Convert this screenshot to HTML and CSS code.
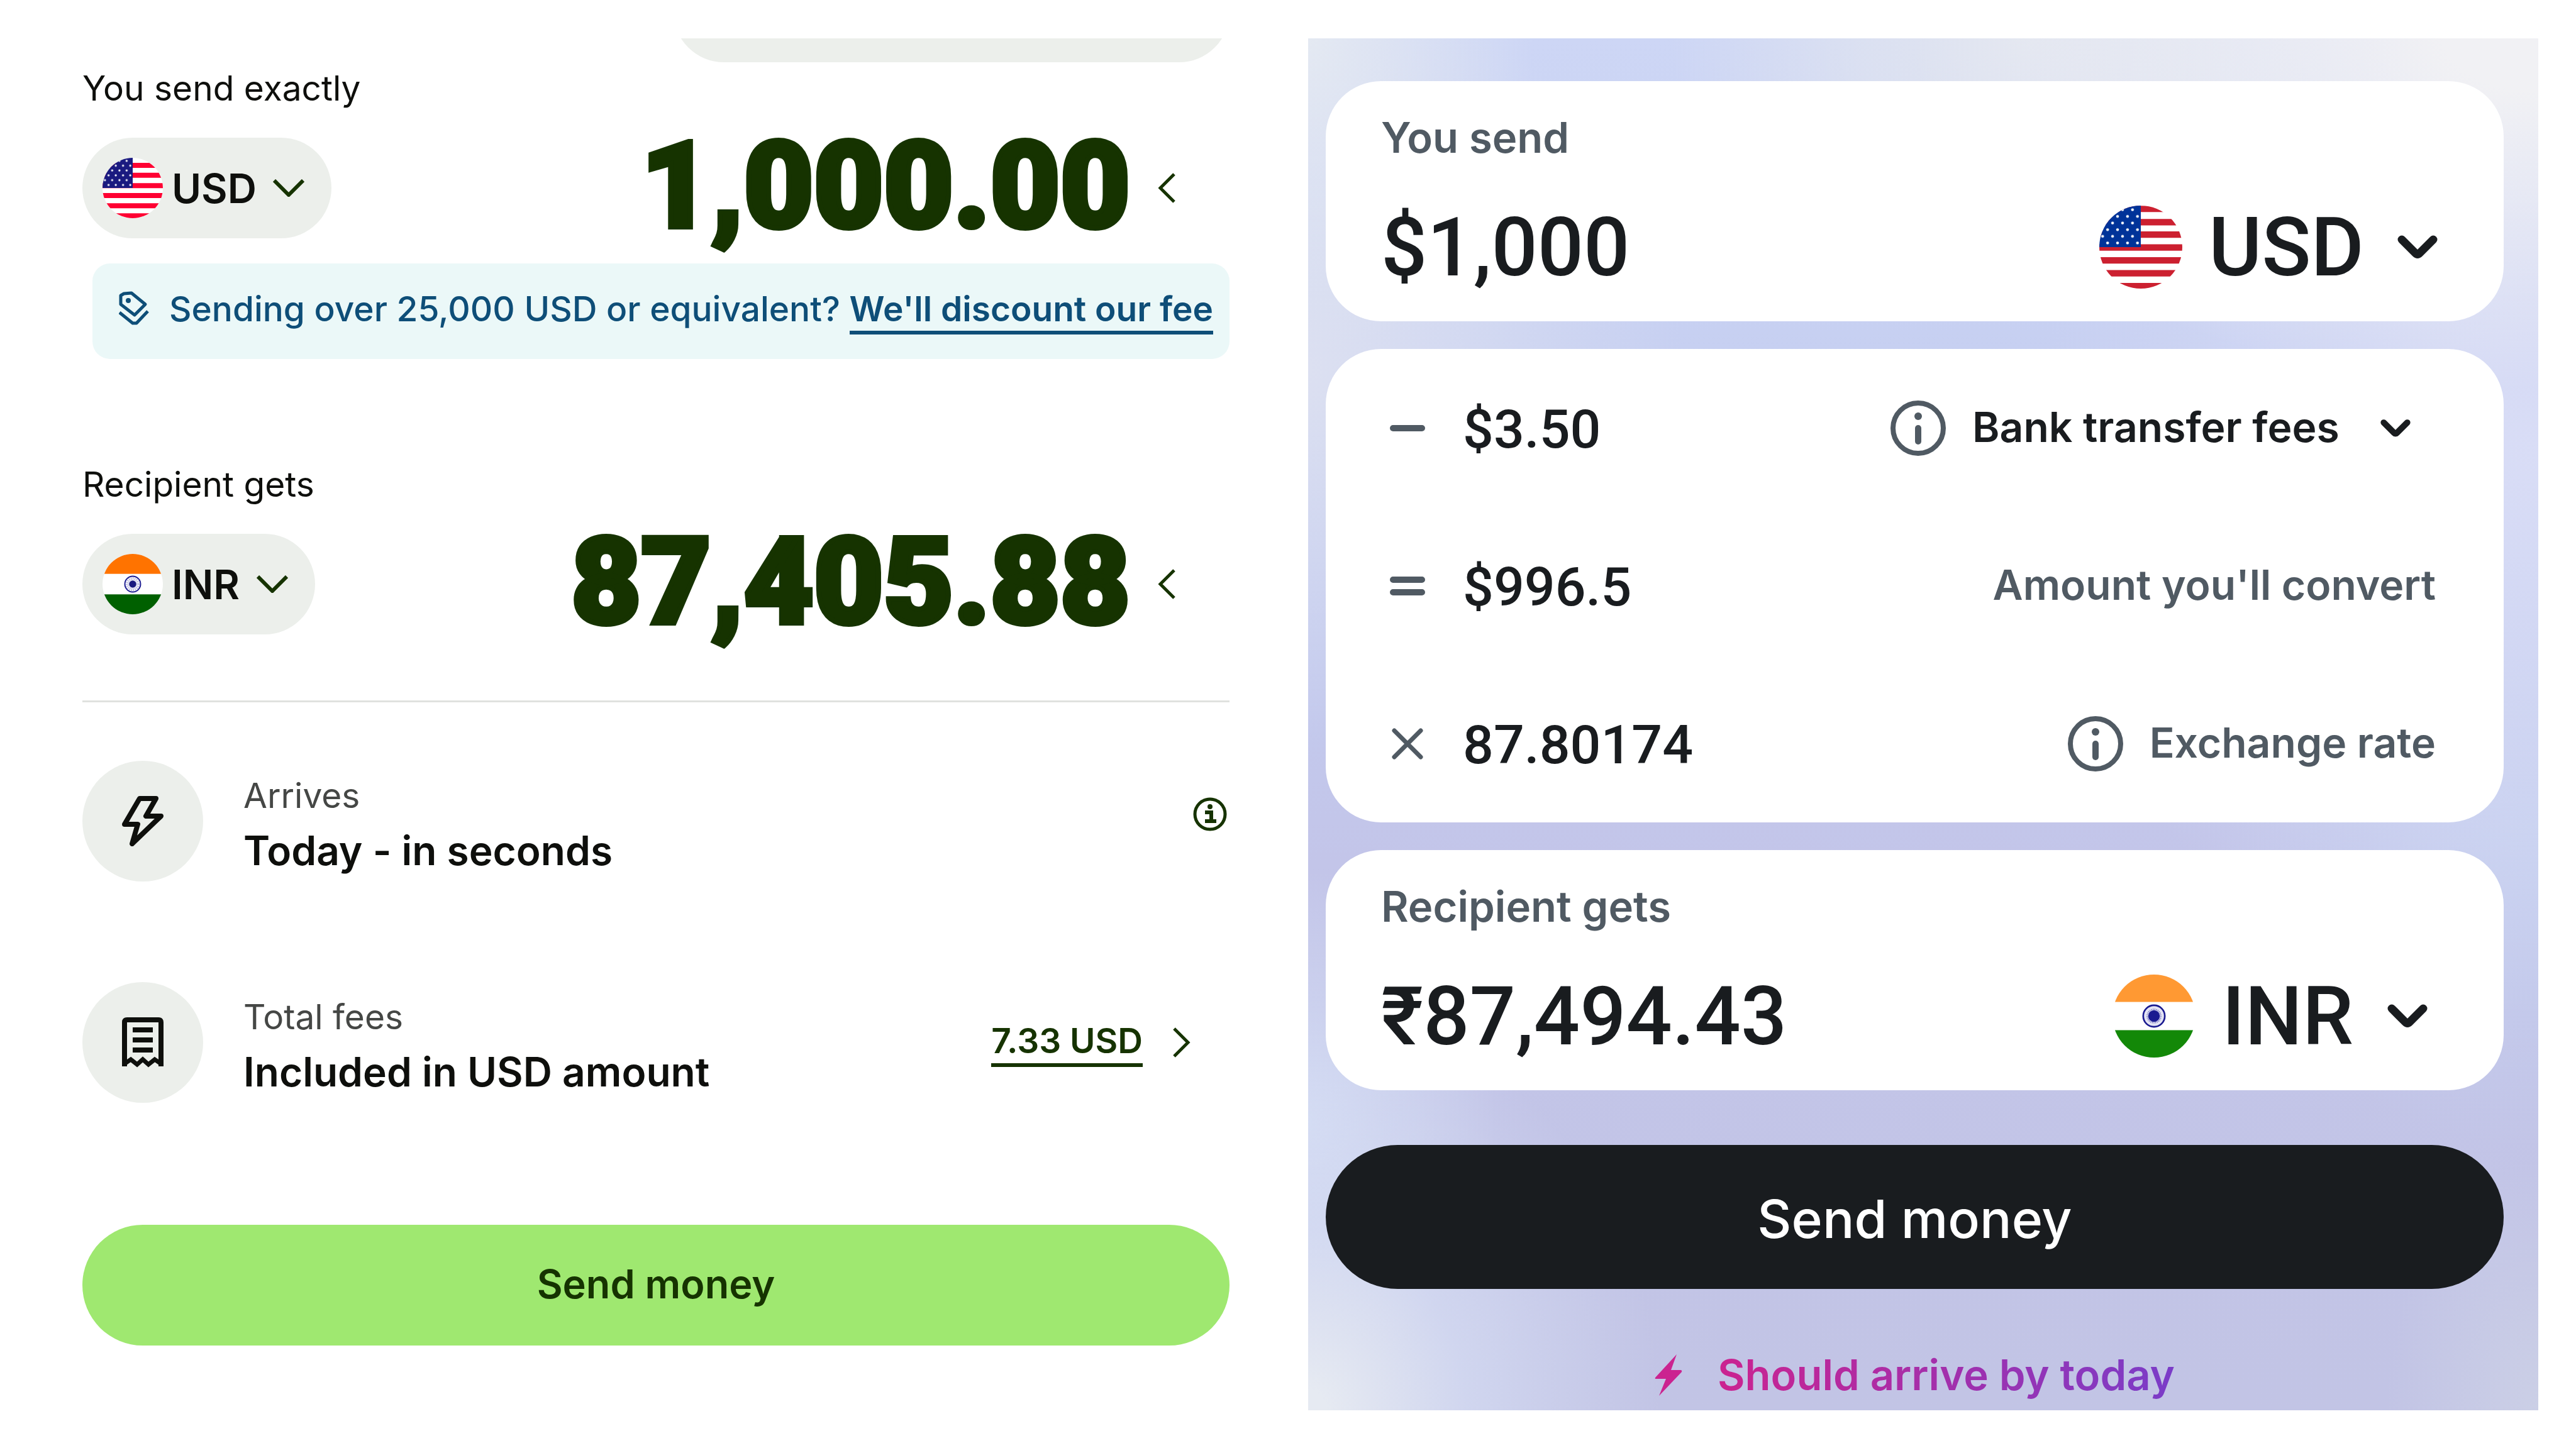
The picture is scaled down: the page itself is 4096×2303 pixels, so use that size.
FILE: index.html
```html
<!DOCTYPE html>
<html lang="en">

<head>
  <meta charset="utf-8">
  <title>Send money</title>
  <link rel="stylesheet" href="styles.css">
</head>

<body>
  <!-- shared icons -->
  <svg class="sprite" aria-hidden="true">
    <defs>
      <clipPath id="round"><circle cx="50" cy="50" r="50" /></clipPath>
      <pattern id="stars" width="12" height="16" patternUnits="userSpaceOnUse" x="1" y="1">
        <circle cx="3" cy="4" r="1.7" fill="#fff" />
        <circle cx="9" cy="12" r="1.7" fill="#fff" />
      </pattern>
    </defs>
    <symbol id="chevron-thin" viewBox="0 0 50 28">
      <path d="M2 2 L25 25 L48 2" fill="none" stroke="#163300" stroke-width="6" />
    </symbol>
    <symbol id="chevron-left" viewBox="0 0 28 48">
      <path d="M26 2 L4 24 L26 46" fill="none" stroke="#163300" stroke-width="5" />
    </symbol>
    <symbol id="chevron-bold" viewBox="0 0 66 40">
      <path d="M8 8 L30 30 Q33 33 36 30 L58 8" fill="none" stroke="#191c1f" stroke-width="13" stroke-linecap="round" />
    </symbol>
    <symbol id="info" viewBox="0 0 88 88">
      <circle cx="44" cy="44" r="40" fill="none" stroke="#505a63" stroke-width="8" />
      <circle cx="44" cy="25" r="6" fill="#505a63" />
      <path d="M44 44 V65" fill="none" stroke="#505a63" stroke-width="10" stroke-linecap="round" />
    </symbol>
  </svg>

  <main class="page">
    <section class="simple">
      <div class="tab-clip"><div class="tab"></div></div>

      <label class="simple-label" for="sendAmount">You send exactly</label>
      <div class="money">
        <div class="pill">
          <svg class="pill-flag" viewBox="0 0 100 100">
            <g clip-path="url(#round)">
              <rect width="100" height="100" fill="#fff" />
              <path d="M0 12.5H100M0 29H100M0 46H100M0 62.500H100M0 79.500H100M0 96H100" stroke="#ff0032" stroke-width="8.300" />
              <rect width="50" height="50" fill="#1a1a80" />
              <rect width="50" height="50" fill="url(#stars)" />
            </g>
          </svg>
          <select class="pill-select" aria-label="Currency you send"><option>USD</option></select>
          <svg class="pill-chevron"><use href="#chevron-thin" /></svg>
        </div>
        <input class="money-amount" id="sendAmount" type="text" value="1,000.00">
        <svg class="money-chevron"><use href="#chevron-left" /></svg>
      </div>

      <div class="notice">
        <svg class="notice-icon" viewBox="0 0 48 54" fill="none" stroke="#0e4e78" stroke-width="5" stroke-linejoin="round">
          <path d="M3 7 L8 4 L20 3 L42 21 L25 38 L3 21 Z" />
          <circle cx="15" cy="15" r="4" fill="#0e4e78" stroke="none" />
          <path d="M1 34 L22 51 L28 51 L46 32" />
        </svg>
        <p class="notice-text">Sending over 25,000 USD or equivalent? <a href="#">We'll discount our fee</a></p>
      </div>

      <label class="simple-label simple-label-gets" for="getAmount">Recipient gets</label>
      <div class="money">
        <div class="pill">
          <svg class="pill-flag" viewBox="0 0 100 100">
            <g clip-path="url(#round)">
              <rect width="100" height="100" fill="#fff" />
              <rect width="100" height="33" fill="#ff7300" />
              <rect y="67" width="100" height="33" fill="#006000" />
            </g>
            <circle cx="50" cy="50" r="13" fill="none" stroke="#1a1a90" stroke-width="2" />
            <circle cx="50" cy="50" r="9" fill="none" stroke="#b9b9e0" stroke-width="5" stroke-dasharray="1.500 1.500" />
            <circle cx="50" cy="50" r="6" fill="#1a1a80" />
          </svg>
          <select class="pill-select" aria-label="Currency recipient gets"><option>INR</option></select>
          <svg class="pill-chevron"><use href="#chevron-thin" /></svg>
        </div>
        <input class="money-amount" id="getAmount" type="text" value="87,405.88">
        <svg class="money-chevron"><use href="#chevron-left" /></svg>
      </div>

      <hr class="divider">

      <div class="detail">
        <div class="detail-icon">
          <svg viewBox="0 0 66 80" fill="none" stroke="#0e0f0c" stroke-width="8" stroke-linejoin="round">
            <path d="M28 4 H54 L38 32 H62 L16 76 L25 45 H4 Z" />
          </svg>
        </div>
        <div class="detail-text">
          <div class="detail-name">Arrives</div>
          <div class="detail-value">Today - in seconds</div>
        </div>
        <button class="detail-info" type="button" aria-label="About arrival time">
          <svg viewBox="0 0 54 54" fill="none" stroke="#163300" stroke-width="5">
            <circle cx="27" cy="27" r="24" />
            <path d="M19 24 H29 V37 M19 38 H37" stroke-width="6" />
            <circle cx="27" cy="15" r="4" fill="#163300" stroke="none" />
          </svg>
        </button>
      </div>

      <div class="detail detail-fees">
        <div class="detail-icon">
          <svg viewBox="0 0 66 80" fill="none" stroke="#0e0f0c" stroke-width="8">
            <path d="M4 78 V8 Q4 4 8 4 H58 Q62 4 62 8 V78" />
            <path d="M4 74 L14 67 L24 75 L33 67 L42 75 L52 67 L62 74" stroke-width="7" />
            <path d="M17 20 H49 M17 36 H49 M17 52 H49" />
          </svg>
        </div>
        <div class="detail-text">
          <div class="detail-name">Total fees</div>
          <div class="detail-value">Included in USD amount</div>
        </div>
        <a class="fee-link" href="#">7.33 USD</a>
        <svg class="fee-chevron" viewBox="0 0 28 48">
          <path d="M2 2 L24 24 L2 46" fill="none" stroke="#163300" stroke-width="5" />
        </svg>
      </div>

      <button class="btn btn-green" type="button">Send money</button>
    </section>

    <section class="quote">
      <div class="card">
        <label class="card-label" for="quoteSend">You send</label>
        <div class="card-row">
          <input class="card-amount" id="quoteSend" type="text" value="$1,000">
          <svg class="card-flag" viewBox="0 0 100 100">
            <g clip-path="url(#round)">
              <rect width="100" height="100" fill="#fff" />
              <path d="M0 4H100M0 20H100M0 35H100M0 50.500H100M0 66H100M0 81.500H100M0 97H100" stroke="#cc2030" stroke-width="7.700" />
              <rect width="50" height="50" fill="#003399" />
              <rect width="50" height="50" fill="url(#stars)" />
            </g>
          </svg>
          <select class="card-select" aria-label="Currency you send"><option>USD</option></select>
          <svg class="card-chevron"><use href="#chevron-bold" /></svg>
        </div>
      </div>

      <div class="card steps">
        <div class="step">
          <svg class="step-sign" viewBox="0 0 56 56"><path d="M5 28 H51" /></svg>
          <span class="step-value">$3.50</span>
          <button class="step-info" type="button" aria-label="About fees"><svg><use href="#info" /></svg></button>
          <select class="step-select" aria-label="Fee type"><option>Bank transfer fees</option></select>
          <svg class="step-chevron"><use href="#chevron-bold" /></svg>
        </div>
        <div class="step">
          <svg class="step-sign" viewBox="0 0 56 56"><path d="M5 18 H51 M5 38 H51" /></svg>
          <span class="step-value">$996.5</span>
          <span class="step-name">Amount you'll convert</span>
        </div>
        <div class="step">
          <svg class="step-sign step-sign-times" viewBox="0 0 56 56"><path d="M7 7 L49 49 M49 7 L7 49" /></svg>
          <span class="step-value">87.80174</span>
          <button class="step-info" type="button" aria-label="About the rate"><svg><use href="#info" /></svg></button>
          <span class="step-name">Exchange rate</span>
        </div>
      </div>

      <div class="card card-gets">
        <label class="card-label" for="quoteGet">Recipient gets</label>
        <div class="card-row">
          <input class="card-amount" id="quoteGet" type="text" value="₹87,494.43">
          <svg class="card-flag" viewBox="0 0 100 100">
            <g clip-path="url(#round)">
              <rect width="100" height="100" fill="#fff" />
              <rect width="100" height="33" fill="#ff9933" />
              <rect y="67" width="100" height="33" fill="#138808" />
            </g>
            <circle cx="50" cy="50" r="13" fill="#e4e4f4" stroke="#1a1a90" stroke-width="2" />
            <circle cx="50" cy="50" r="7" fill="#1a1a90" />
            <circle cx="50" cy="50" r="8" fill="none" stroke="#8080c8" stroke-width="2" stroke-dasharray="1 1" />
          </svg>
          <select class="card-select" aria-label="Currency recipient gets"><option>INR</option></select>
          <svg class="card-chevron"><use href="#chevron-bold" /></svg>
        </div>
      </div>

      <button class="btn btn-dark" type="button">Send money</button>

      <p class="arrival">
        <svg class="arrival-icon" viewBox="0 0 44 66"><path d="M35 0 L1 37 Q0 39 2 39 H18 L7 66 L43 28 Q44 25 41 25 H26 Z" fill="#cb2390" /></svg>
        <span class="arrival-text">Should arrive by today</span>
      </p>
    </section>
  </main>
</body>

</html>
```
FILE: styles.css
```css
* {
  box-sizing: border-box;
}

body {
  margin: 0;
  background-color: #ffffff;
  font-family: Inter, "Liberation Sans", sans-serif;
  font-optical-sizing: none;
}

button,
input,
select {
  margin: 0;
  padding: 0;
  border: none;
  background: none;
  color: inherit;
  font: inherit;
  appearance: none;
}

p {
  margin: 0;
}

svg {
  display: block;
  flex: none;
}

.sprite {
  position: absolute;
  width: 0;
  height: 0;
}

.page {
  display: grid;
  grid-template-columns: minmax(0, 1824fr) minmax(0, 1956fr);
  column-gap: 125px;
  padding: 61px 60px 60px 131px;
}

/* left: simple calculator */
.simple {
  display: flex;
  flex-direction: column;
  color: #0e0f0c;
}

.tab-clip {
  display: flex;
  align-items: flex-end;
  justify-content: flex-end;
  height: 38px;
  overflow: hidden;
}

.tab {
  flex: none;
  width: 884px;
  height: 160px;
  border-radius: 80px;
  background-color: #ecefeb;
}

.simple-label {
  margin: 5px 0 43px;
  font-size: 55px;
  line-height: 72px;
}

.simple-label-gets {
  margin-top: 163px;
}

.money {
  display: flex;
  align-items: center;
  height: 160px;
}

.pill {
  display: flex;
  align-items: center;
  height: 160px;
  padding: 0 43px 0 32px;
  border-radius: 80px;
  background-color: #ecefeb;
}

.pill-flag {
  width: 96px;
  height: 96px;
}

.pill-select {
  margin: 0 26px 0 14px;
  font-size: 64px;
  font-weight: 600;
}

.pill-chevron {
  width: 50px;
  height: 28px;
}

.money-amount {
  flex: 1;
  min-width: 0;
  padding-bottom: 8px;
  color: #163300;
  font-family: Roboto, "Liberation Sans", sans-serif;
  font-size: 192px;
  font-weight: 900;
  line-height: 160px;
  text-align: right;
  -webkit-text-stroke: 8px #163300;
}

.money-chevron {
  width: 28px;
  height: 48px;
  margin: 0 86px 0 44px;
}

.notice {
  display: flex;
  gap: 32px;
  margin: 40px 0 0 16px;
  padding: 36px 32px 44px 42px;
  border-radius: 28px;
  background-color: #ebf8f8;
  color: #0e4e78;
}

.notice-icon {
  width: 48px;
  height: 54px;
  margin-top: 8px;
}

.notice-text {
  font-size: 55px;
  font-weight: 450;
  line-height: 72px;
  white-space: nowrap;
}

.notice-text a {
  padding-bottom: 2px;
  border-bottom: 6px solid #0e4e78;
  color: inherit;
  font-weight: 600;
  text-decoration: none;
}

.divider {
  width: 100%;
  height: 3px;
  margin: 105px 0 93px;
  border: none;
  background-color: #e0e2df;
}

.detail {
  display: flex;
  align-items: center;
  height: 192px;
}

.detail-fees {
  margin: 160px 0 194px;
}

.detail-icon {
  display: flex;
  align-items: center;
  justify-content: center;
  width: 192px;
  height: 192px;
  border-radius: 50%;
  background-color: #ecefeb;
}

.detail-icon svg {
  width: 66px;
  height: 80px;
}

.detail-text {
  flex: 1;
  padding: 14px 0 0 64px;
}

.detail-name {
  margin-bottom: 8px;
  color: #454745;
  font-size: 55px;
  line-height: 72px;
}

.detail-value {
  font-size: 64px;
  font-weight: 600;
  line-height: 88px;
}

.detail-info {
  align-self: flex-start;
  width: 54px;
  height: 54px;
  margin: 58px 4px 0 0;
}

.fee-link {
  border-bottom: 6px solid #163300;
  color: #163300;
  font-size: 55px;
  font-weight: 600;
  line-height: 72px;
  text-decoration: none;
}

.fee-chevron {
  width: 28px;
  height: 48px;
  margin: 0 62px 0 48px;
}

.btn {
  width: 100%;
  border-radius: 120px;
  cursor: pointer;
}

.btn-green {
  height: 192px;
  padding-bottom: 4px;
  background-color: #9fe870;
  color: #163300;
  font-size: 63px;
  font-weight: 600;
}

/* right: quote panel */
.quote {
  display: flex;
  flex-direction: column;
  gap: 44px;
  padding: 68px 55px 0 28px;
  background:
    radial-gradient(ellipse 1000px 560px at 100% 0, #f1f1f4 15%, rgba(241, 241, 244, 0.600) 50%, rgba(241, 241, 244, 0) 100%),
    radial-gradient(ellipse 360px 500px at 0 0, #e4e9f2 0%, rgba(228, 233, 242, 0) 100%),
    radial-gradient(ellipse 560px 400px at 58% 0, #e1e5f0 0%, rgba(225, 229, 240, 0.700) 45%, rgba(226, 230, 240, 0) 100%),
    radial-gradient(ellipse 560px 640px at 0 100%, #e6eaf2 5%, rgba(214, 221, 243, 0.700) 45%, rgba(200, 210, 240, 0) 100%),
    radial-gradient(ellipse 300px 400px at 0 79%, #d3dbf3 0%, rgba(211, 219, 243, 0) 100%),
    radial-gradient(ellipse 240px 400px at 100% 100%, #cbcfe6 0%, rgba(203, 207, 230, 0) 100%),
    radial-gradient(ellipse 600px 600px at 0 24%, #dce0f1 0%, rgba(220, 224, 241, 0.500) 50%, rgba(220, 224, 241, 0) 100%),
    radial-gradient(ellipse 800px 900px at 100% 30%, #d9ddf6 0%, rgba(205, 217, 244, 0) 100%),
    radial-gradient(ellipse 500px 500px at 100% 58%, #c5cfef 0%, rgba(197, 207, 239, 0) 100%),
    linear-gradient(#cdd6f5 0%, #c6cff1 25%, #c3caee 45%, #c3c5e9 60%, #c2c4e5 100%);
  color: #191c1f;
}

.card {
  padding: 50px 104px 38px 88px;
  border-radius: 88px;
  background-color: #ffffff;
}

.card-gets {
  padding-right: 120px;
}

.card-label {
  display: block;
  margin-bottom: 54px;
  color: #505a63;
  font-size: 67px;
  font-weight: 600;
  line-height: 80px;
}

.card-row {
  display: flex;
  align-items: center;
  height: 160px;
  font-family: Roboto, "Liberation Sans", sans-serif;
  font-size: 129px;
  font-weight: 500;
}

.card-amount {
  flex: 1;
  min-width: 0;
}

.card-flag {
  width: 132px;
  height: 132px;
}

.card-select {
  margin: 0 52px 0 42px;
}

.card-chevron {
  width: 66px;
  height: 40px;
}

.steps {
  padding: 0 108px 0 102px;
}

.step {
  display: flex;
  align-items: center;
  height: 251px;
}

.step-sign {
  width: 56px;
  height: 56px;
  fill: none;
  stroke: #505a63;
  stroke-width: 10;
  stroke-linecap: round;
}

.step-sign-times {
  stroke-width: 7;
}

.step-value {
  flex: 1;
  padding: 4px 0 0 60px;
  font-family: Roboto, "Liberation Sans", sans-serif;
  font-size: 86px;
  font-weight: 500;
}

.step-info {
  width: 88px;
  height: 88px;
  margin-right: 42px;
}

.step-info svg {
  width: 88px;
  height: 88px;
}

.step-select,
.step-name {
  padding-bottom: 4px;
  font-size: 66px;
  font-weight: 600;
}

.step-name {
  color: #505a63;
}

.step-chevron {
  width: 50px;
  height: 30px;
  margin: 0 39px 0 64px;
}

.btn-dark {
  height: 229px;
  margin-top: 43px;
  padding-top: 6px;
  background-color: #191c1f;
  color: #ffffff;
  font-size: 84px;
  font-weight: 500;
}

.arrival {
  display: flex;
  align-items: center;
  justify-content: center;
  gap: 56px;
  margin: 50px 0 13px;
  font-size: 67px;
  font-weight: 600;
  line-height: 86px;
}

.arrival-icon {
  width: 44px;
  height: 66px;
}

.arrival-text {
  background: linear-gradient(90deg, #cb2390, #7a3cc8);
  background-clip: text;
  color: transparent;
}
```
